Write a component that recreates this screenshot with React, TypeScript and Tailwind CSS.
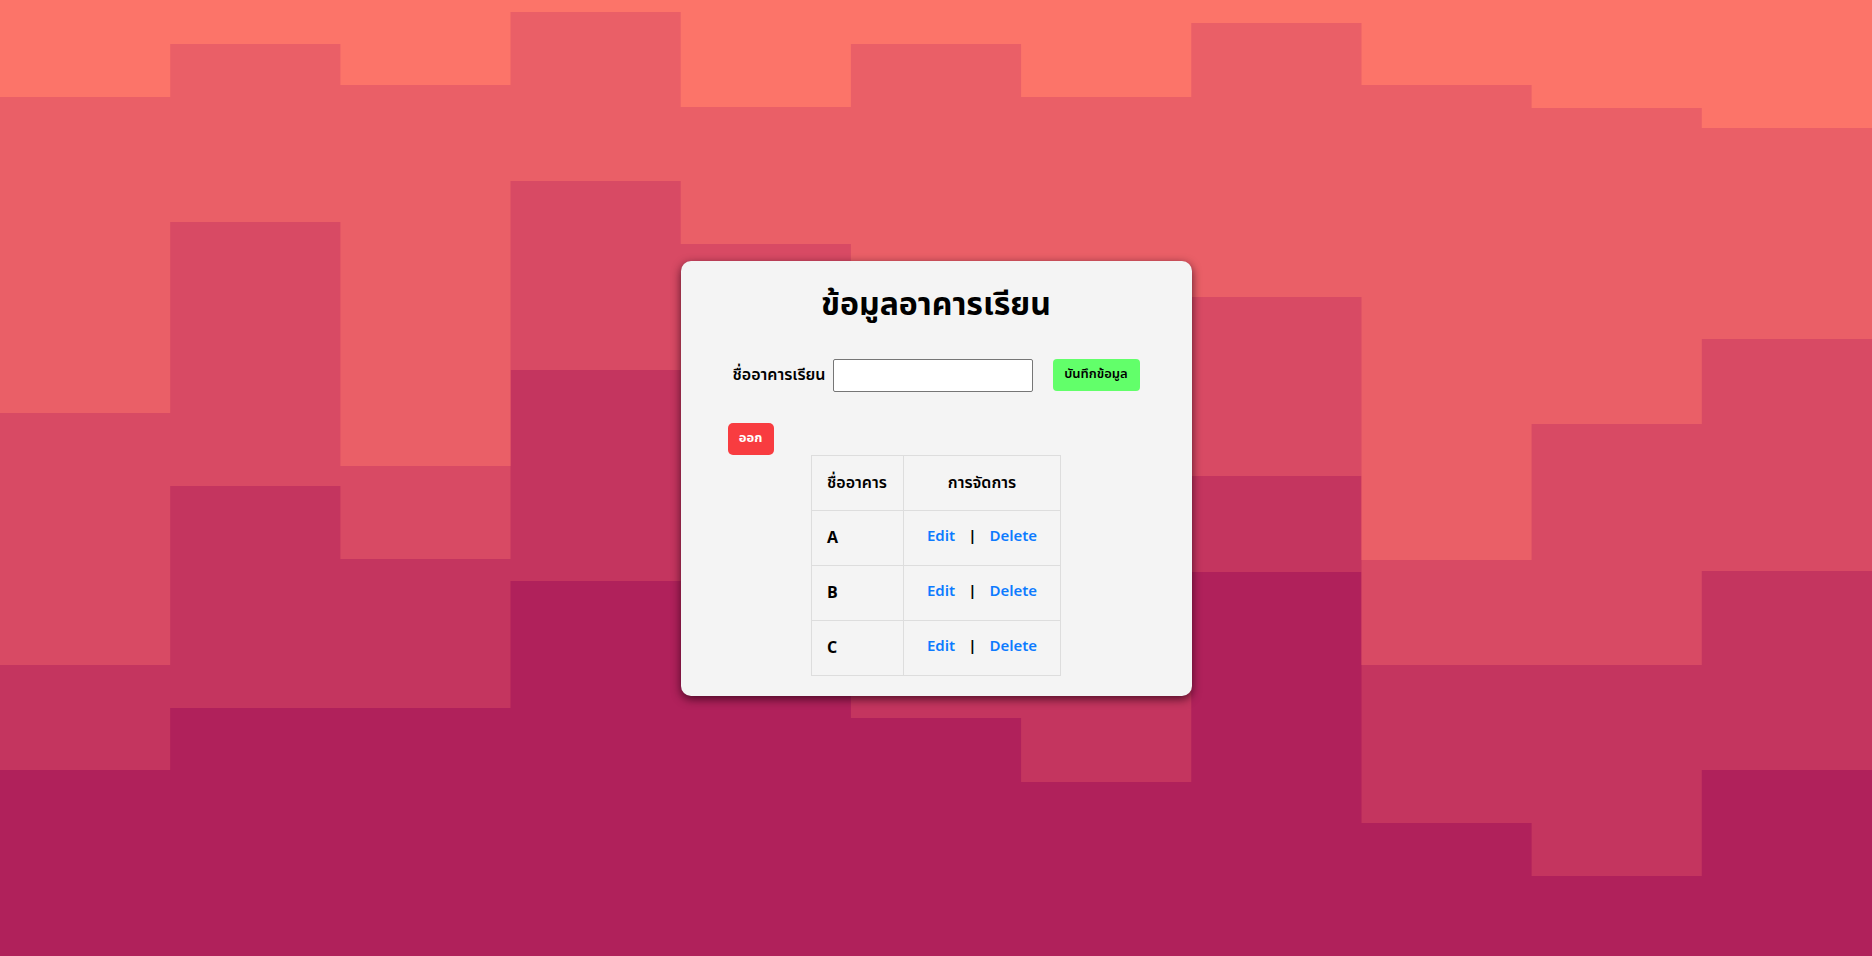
import React from 'react';

const layers = [
  { color: '#c4355f', bottoms: [770, 708, 708, 581, 620, 718, 782, 572, 823, 876, 770] },
  { color: '#d84a64', bottoms: [665, 486, 559, 370, 470, 520, 580, 476, 665, 665, 571] },
  { color: '#ea5f67', bottoms: [413, 222, 466, 181, 244, 300, 330, 297, 560, 424, 339] },
  { color: '#fc7469', bottoms: [97, 44, 85, 12, 107, 44, 97, 23, 85, 108, 128] },
];

const W = 1872;
const H = 956;
const colW = W / 11;

function stepPath(bottoms: number[]) {
  let d = `M0 0 L0 ${bottoms[0]}`;
  bottoms.forEach((b, i) => {
    d += ` L${(i * colW).toFixed(1)} ${b} L${((i + 1) * colW).toFixed(1)} ${b}`;
  });
  d += ` L${W} 0 Z`;
  return d;
}

function StepBackground() {
  return (
    <svg
      className="absolute inset-0 h-full w-full"
      viewBox={`0 0 ${W} ${H}`}
      preserveAspectRatio="none"
    >
      <rect width={W} height={H} fill="#b0215b" />
      {layers.map((l) => (
        <path key={l.color} d={stepPath(l.bottoms)} fill={l.color} />
      ))}
    </svg>
  );
}

const buildings = ['A', 'B', 'C'];

export default function App() {
  return (
    <div
      className="relative flex h-[956px] w-full items-center justify-center overflow-hidden"
      style={{ fontFamily: '"Noto Sans Thai", "Noto Sans", "DejaVu Sans", sans-serif' }}
    >
      <StepBackground />
      <div className="relative flex h-[435px] w-[511px] flex-col items-center rounded-[10px] bg-[#f4f4f4] pt-[20px] shadow-[0_3px_10px_rgba(40,0,20,0.75)]">
        <h1 className="text-[32px] leading-[48px] font-bold text-black">ข้อมูลอาคารเรียน</h1>

        <div className="mt-[30px] flex h-[33px] items-center">
          <label className="text-[16px] font-semibold text-black">ชื่ออาคารเรียน</label>
          <input
            type="text"
            className="ml-[7px] h-[33px] w-[200px] rounded-[2px] border border-[#767676] bg-white px-2"
          />
          <button className="ml-[20px] h-[32px] w-[87px] rounded-[4px] bg-[#62ff6a] text-[13px] font-semibold text-black">
            บันทึกข้อมูล
          </button>
        </div>

        <button className="mt-[31px] ml-[47px] h-[32px] w-[46px] self-start rounded-[5px] bg-[#f83c40] text-[13px] font-bold text-white">
          ออก
        </button>

        <table className="w-[250px] border-collapse text-[16px] text-black">
          <thead>
            <tr className="h-[55px]">
              <th className="w-[92px] border border-[#dddddd] pl-[15px] text-left font-semibold">ชื่ออาคาร</th>
              <th className="border border-[#dddddd] text-center font-semibold">การจัดการ</th>
            </tr>
          </thead>
          <tbody>
            {buildings.map((b) => (
              <tr key={b} className="h-[55px]">
                <td className="border border-[#dddddd] pl-[15px] font-bold">{b}</td>
                <td className="border border-[#dddddd] text-center text-[15px] font-semibold">
                  <a className="cursor-pointer text-[#0d7bff]">Edit</a>
                  <span className="mx-[13px] font-bold">|</span>
                  <a className="cursor-pointer text-[#0d7bff]">Delete</a>
                </td>
              </tr>
            ))}
          </tbody>
        </table>
      </div>
    </div>
  );
}
